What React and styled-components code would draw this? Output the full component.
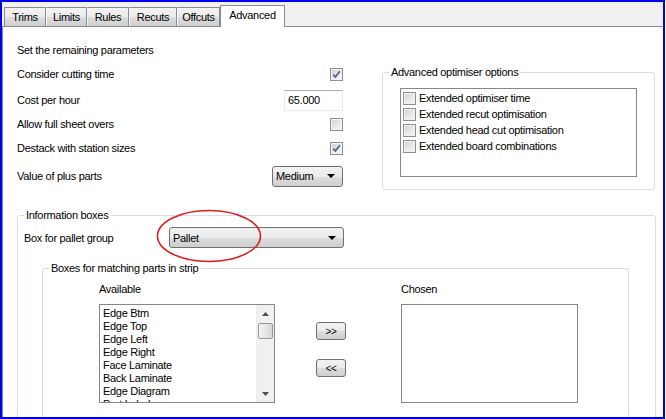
import React from "react";
import styled, { createGlobalStyle } from "styled-components";

const GlobalStyle = createGlobalStyle`
  html, body {
    margin: 0;
    padding: 0;
    background: #fff;
  }
  body {
    font-family: "Liberation Sans", Arial, sans-serif;
    font-size: 11px;
    letter-spacing: -0.3px;
    color: #000;
  }
`;

const Frame = styled.div`
  width: 665px;
  height: 419px;
  box-sizing: border-box;
  border: 2px solid #0000f0;
  background: #f0f0f0;
  display: flex;
  flex-direction: column;
  overflow: hidden;
`;

const TabStrip = styled.div`
  height: 24px;
  flex: none;
  display: flex;
  align-items: flex-end;
  padding-left: 2px;
  border-bottom: 1px solid #898c95;
`;

const Tab = styled.div`
  box-sizing: border-box;
  width: ${(p) => p.w}px;
  height: ${(p) => (p.active ? 22 : 19)}px;
  margin-bottom: ${(p) => (p.active ? -1 : 0)}px;
  border: 1px solid #898c95;
  border-left-color: ${(p) => (p.first || p.active ? "#898c95" : "#f6f6f6")};
  border-bottom: 0;
  background: ${(p) =>
    p.active ? "#fff" : "linear-gradient(#f3f3f3, #ebebeb 50%, #dddddd 51%, #cfcfcf)"};
  display: flex;
  justify-content: center;
  align-items: ${(p) => (p.active ? "flex-start" : "center")};
  padding-top: ${(p) => (p.active ? 3 : 0)}px;
  z-index: ${(p) => (p.active ? 1 : 0)};
`;

const Panel = styled.div`
  flex: 1;
  background: #fff;
  border-left: 1px solid #898c95;
  padding: 11px 0 0 14px;
  overflow: hidden;
`;

const TopSection = styled.div`
  display: flex;
  align-items: flex-start;
`;

const LeftCol = styled.div`
  width: 326px;
  display: flex;
  flex-direction: column;
`;

const Row = styled.div`
  height: ${(p) => p.h}px;
  display: flex;
  align-items: center;
  justify-content: space-between;
`;

const Group = styled.fieldset`
  box-sizing: border-box;
  margin: ${(p) => p.m || 0};
  padding: 0;
  width: ${(p) => p.w}px;
  height: ${(p) => p.h}px;
  border: 1px solid #d5dfe5;
  border-radius: 3px;
  min-width: 0;
`;

const Legend = styled.legend`
  margin-left: 6px;
  padding: 0 2px;
  line-height: 13px;
  height: 13px;
`;

const CheckBox = styled.span`
  width: 13px;
  height: 13px;
  flex: none;
  box-sizing: border-box;
  border: 1px solid #8e8f8f;
  background: linear-gradient(135deg, #cfcfcf, #f2f2f2 80%);
  box-shadow: inset 0 0 0 1px #f4f4f4;
  display: inline-flex;
  align-items: center;
  justify-content: center;
`;

const TextBox = styled.div`
  box-sizing: border-box;
  width: 59px;
  height: 21px;
  border: 1px solid #e3e9ef;
  border-top-color: #abadb3;
  padding-left: 3px;
  display: flex;
  align-items: center;
`;

const Combo = styled.div`
  box-sizing: border-box;
  width: ${(p) => p.w}px;
  height: 21px;
  border: 1px solid #707070;
  border-radius: 3px;
  background: linear-gradient(#f2f2f2, #ebebeb 50%, #dddddd 51%, #cfcfcf);
  padding: 0 7px 0 3px;
  display: flex;
  align-items: center;
  justify-content: space-between;
`;

const ComboArrow = styled.span`
  width: 0;
  height: 0;
  border-left: 4px solid transparent;
  border-right: 4px solid transparent;
  border-top: 4px solid #000;
`;

const OptionList = styled.div`
  box-sizing: border-box;
  width: 237px;
  height: 89px;
  margin: 9px 0 0 17px;
  border: 1px solid #828790;
  padding: 3px 0 0 2px;
`;

const OptionItem = styled.div`
  height: 16px;
  display: flex;
  align-items: flex-start;
  gap: 3px;
`;

const PalletRow = styled.div`
  position: relative;
  display: flex;
  align-items: center;
  height: 21px;
  margin-top: 5px;
  padding-left: 6px;
`;

const PalletLabel = styled.span`
  width: 145px;
`;

const Circle = styled.svg`
  position: absolute;
  left: 138px;
  top: -18px;
  width: 106px;
  height: 54px;
  overflow: visible;
  pointer-events: none;
`;

const Transfer = styled.div`
  display: flex;
  align-items: flex-start;
  padding-left: 56px;
`;

const ListCol = styled.div`
  display: flex;
  flex-direction: column;
`;

const ListCaption = styled.div`
  height: 13px;
  line-height: 13px;
  margin: 8px 0 8px;
`;

const ListBox = styled.div`
  box-sizing: border-box;
  width: ${(p) => p.w}px;
  height: 99px;
  border: 1px solid #828790;
  background: #fff;
  display: flex;
  overflow: hidden;
`;

const ListItems = styled.div`
  flex: 1;
  padding: 2px 0 0 3px;
`;

const ListItem = styled.div`
  height: 13px;
  line-height: 13px;
  white-space: nowrap;
`;

const ScrollBar = styled.div`
  width: 17px;
  flex: none;
  background: #f0f0f0;
  border-left: 1px solid #ececec;
  display: flex;
  flex-direction: column;
`;

const ScrollArrow = styled.div`
  height: 17px;
  display: flex;
  align-items: center;
  justify-content: center;
`;

const ScrollThumb = styled.div`
  box-sizing: border-box;
  height: 16px;
  margin: 1px 1px 0 1px;
  border: 1px solid #969696;
  border-radius: 2px;
  background: linear-gradient(90deg, #f3f3f3, #e6e6e6 50%, #d8d8d8);
`;

const ScrollTrack = styled.div`
  flex: 1;
`;

const ButtonCol = styled.div`
  display: flex;
  flex-direction: column;
  gap: 19px;
  margin: 47px 55px 0 41px;
`;

const SmallButton = styled.div`
  box-sizing: border-box;
  width: 30px;
  height: 18px;
  border: 1px solid #707070;
  border-radius: 3px;
  background: linear-gradient(#f2f2f2, #ebebeb 50%, #dddddd 51%, #cfcfcf);
  display: flex;
  align-items: center;
  justify-content: center;
  font-size: 10px;
`;

const Check = ({ checked }) => (
  <CheckBox>
    {checked && (
      <svg width="9" height="9" viewBox="0 0 9 9">
        <path d="M1.2 4.6 L3.4 7 L7.8 1.2" fill="none" stroke="#4a5e8f" strokeWidth="1.6" />
      </svg>
    )}
  </CheckBox>
);

const Arrow = ({ up }) => (
  <svg width="7" height="4" viewBox="0 0 7 4">
    <path d={up ? "M0 4 L3.5 0 L7 4 Z" : "M0 0 L3.5 4 L7 0 Z"} fill="#4d4d4d" />
  </svg>
);

const tabs = [
  ["Trims", 42],
  ["Limits", 41],
  ["Rules", 42],
  ["Recuts", 48],
  ["Offcuts", 43],
];

const options = [
  "Extended optimiser time",
  "Extended recut optimisation",
  "Extended head cut optimisation",
  "Extended board combinations",
];

const available = [
  "Edge Btm",
  "Edge Top",
  "Edge Left",
  "Edge Right",
  "Face Laminate",
  "Back Laminate",
  "Edge Diagram",
  "Part Label",
];

export default function App() {
  return (
    <>
      <GlobalStyle />
      <Frame>
        <TabStrip>
          {tabs.map(([t, w], i) => (
            <Tab key={t} w={w} first={i === 0}>
              {t}
            </Tab>
          ))}
          <Tab w={65} active>
            Advanced
          </Tab>
        </TabStrip>
        <Panel>
          <TopSection>
            <LeftCol>
              <Row h={24}>Set the remaining parameters</Row>
              <Row h={24}>
                Consider cutting time
                <Check checked />
              </Row>
              <Row h={28}>
                Cost per hour
                <TextBox>65.000</TextBox>
              </Row>
              <Row h={20}>
                Allow full sheet overs
                <Check />
              </Row>
              <Row h={28}>
                Destack with station sizes
                <Check checked />
              </Row>
              <Row h={28}>
                Value of plus parts
                <Combo w={71}>
                  Medium
                  <ComboArrow />
                </Combo>
              </Row>
            </LeftCol>
            <Group w={273} h={124} m="28px 0 0 39px">
              <Legend>Advanced optimiser options</Legend>
              <OptionList>
                {options.map((o) => (
                  <OptionItem key={o}>
                    <Check />
                    {o}
                  </OptionItem>
                ))}
              </OptionList>
            </Group>
          </TopSection>
          <Group w={639} h={260} m="19px 0 0 0">
            <Legend>Information boxes</Legend>
            <PalletRow>
              <PalletLabel>Box for pallet group</PalletLabel>
              <Combo w={175}>
                Pallet
                <ComboArrow />
              </Combo>
              <Circle viewBox="0 0 106 54">
                <ellipse cx="53" cy="27" rx="51.5" ry="25.5" fill="none" stroke="#e3191c" strokeWidth="1.6" />
              </Circle>
            </PalletRow>
            <Group w={587} h={200} m="14px 0 0 24px">
              <Legend>Boxes for matching parts in strip</Legend>
              <Transfer>
                <ListCol>
                  <ListCaption>Available</ListCaption>
                  <ListBox w={176}>
                    <ListItems>
                      {available.map((a) => (
                        <ListItem key={a}>{a}</ListItem>
                      ))}
                    </ListItems>
                    <ScrollBar>
                      <ScrollArrow>
                        <Arrow up />
                      </ScrollArrow>
                      <ScrollThumb />
                      <ScrollTrack />
                      <ScrollArrow>
                        <Arrow />
                      </ScrollArrow>
                    </ScrollBar>
                  </ListBox>
                </ListCol>
                <ButtonCol>
                  <SmallButton>&gt;&gt;</SmallButton>
                  <SmallButton>&lt;&lt;</SmallButton>
                </ButtonCol>
                <ListCol>
                  <ListCaption>Chosen</ListCaption>
                  <ListBox w={177} />
                </ListCol>
              </Transfer>
            </Group>
          </Group>
        </Panel>
      </Frame>
    </>
  );
}
